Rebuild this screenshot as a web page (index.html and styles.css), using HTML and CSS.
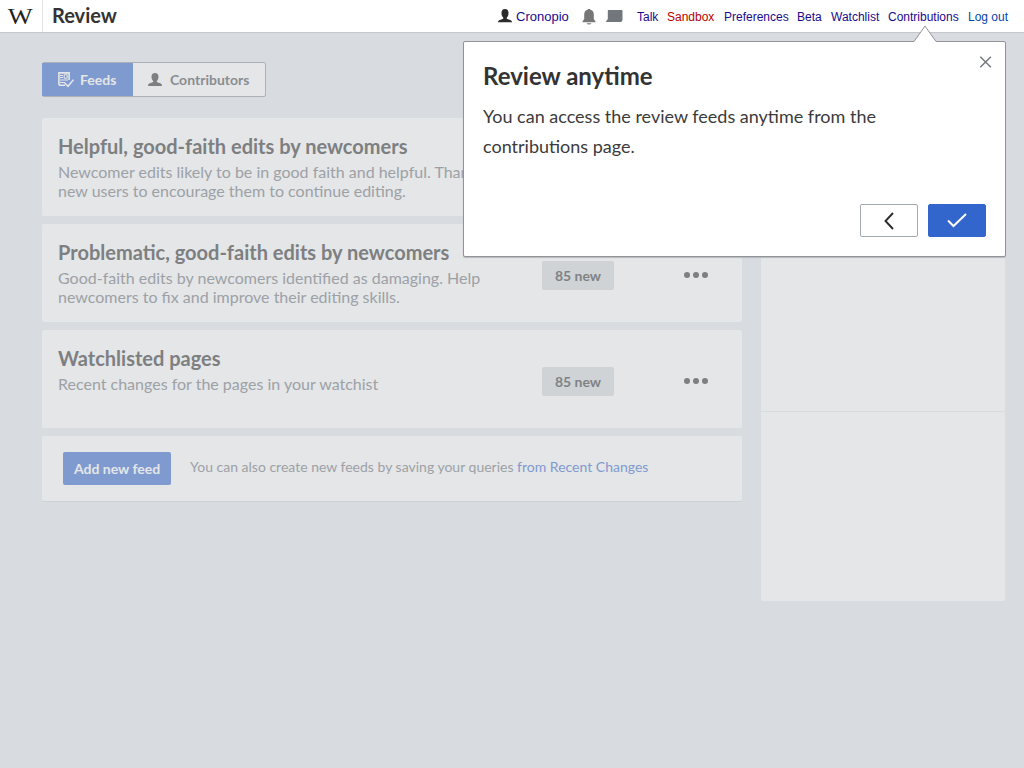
FILE: index.html
```html
<!DOCTYPE html>
<html lang="en">
<head>
<meta charset="utf-8">
<title>Review</title>
<link rel="stylesheet" href="styles.css">
</head>
<body>
<header class="topbar">
  <div class="logo"><span>W</span></div>
  <h1 class="page-title">Review</h1>
  <nav class="personal">
    <svg class="user-icon" width="14" height="14" viewBox="0 0 14 14"><path d="M7 0C4.600 0 3.500 1.600 3.500 4c0 2 .6 3.600 1.700 4.600v1.200L1.200 11.300Q0 11.800 0 13.300h14q0-1.500-1.200-2L8.800 9.800V8.600C9.900 7.600 10.500 6 10.500 4 10.500 1.600 9.400 0 7 0z"/></svg>
    <a class="name" href="#"><span>Cronopio</span></a>
    <svg class="bell-icon" width="14" height="16" viewBox="0 0 14 16"><path d="M6 0h2v.5c2.700.6 3.800 2.500 3.800 5v4.500L13.500 12.500v.8H.5v-.8l1.700-2.500V5.500C2.200 3 3.300 1.100 6 .5zM4.500 14.200h5Q8.500 15.600 7 15.600t-2.500-1.400z"/></svg>
    <svg class="tray-icon" width="17" height="12" viewBox="0 0 17 12"><path d="M2.500 0h13q1 0 1 1v8.500q0 2.500-2 2.500H.2v-.8L1.800 9V1q0-1 .7-1z"/></svg>
    <a class="talk" href="#"><span>Talk</span></a>
    <a class="sandbox" href="#"><span>Sandbox</span></a>
    <a class="prefs" href="#"><span>Preferences</span></a>
    <a class="beta" href="#"><span>Beta</span></a>
    <a class="watch" href="#"><span>Watchlist</span></a>
    <a class="contribs" href="#"><span>Contributions</span></a>
    <a class="logout" href="#"><span>Log out</span></a>
  </nav>
</header>
<main class="page">
  <div class="tabs">
    <div class="tab tab-active">
      <svg width="16" height="16" viewBox="0 0 16 16" fill="none" stroke="#e4e6e8"><path d="M7 13.300H2.500Q.9 13.300.9 11.500V.9h10.200v7" stroke-width="1.600"/><path d="M2 3.500h3M2 5.500h3M2 8h8M2 10.500h5" stroke-width="1.200"/><path d="M6.200 2.700h3v3.500h-3z"/><path d="M6.700 11l3.300 3.300L15.500 7.700" stroke-width="1.600"/></svg>
      <span>Feeds</span>
    </div>
    <div class="tab">
      <svg width="14" height="13" viewBox="0 0 14 14" preserveAspectRatio="none"><path fill="#7d7f81" d="M7 0C4.600 0 3.500 1.600 3.500 4c0 2 .6 3.600 1.700 4.600v1.200L1.200 11.300Q0 11.800 0 14h14q0-2.200-1.200-2.700L8.800 9.800V8.600C9.900 7.600 10.500 6 10.500 4 10.500 1.600 9.400 0 7 0z"/></svg>
      <span>Contributors</span>
    </div>
  </div>
  <div class="columns">
    <section class="feeds">
      <article class="feed">
        <div class="feed-text"><h2>Helpful, good-faith edits by newcomers</h2>
        <p>Newcomer edits likely to be in good faith and helpful. Thank<br>new users to encourage them to continue editing.</p></div>
      </article>
      <article class="feed">
        <div class="feed-text"><h2>Problematic, good-faith edits by newcomers</h2>
        <p>Good-faith edits by newcomers identified as damaging. Help<br>newcomers to fix and improve their editing skills.</p></div>
        <span class="count">85 new</span>
        <svg class="more" width="24" height="6" viewBox="0 0 24 6"><circle cx="3" cy="3" r="3"/><circle cx="12" cy="3" r="3"/><circle cx="21" cy="3" r="3"/></svg>
      </article>
      <article class="feed">
        <div class="feed-text"><h2>Watchlisted pages</h2>
        <p>Recent changes for the pages in your watchist</p></div>
        <span class="count">85 new</span>
        <svg class="more" width="24" height="6" viewBox="0 0 24 6"><circle cx="3" cy="3" r="3"/><circle cx="12" cy="3" r="3"/><circle cx="21" cy="3" r="3"/></svg>
      </article>
      <div class="new-feed">
        <div class="add">Add new feed</div>
        <p>You can also create new feeds by saving your queries <a href="#">from Recent Changes</a></p>
      </div>
    </section>
    <aside class="side"><div class="side-top"></div><div class="side-bottom"></div></aside>
  </div>
</main>
<div class="popup">
  <svg class="pointer" width="26" height="18" viewBox="0 0 26 18"><path d="M1 16.500h1L13 1.500 24 16.500h1V18H1z" fill="#fff"/><path d="M1 16.500h1L13 1 24 16.500h1" fill="none" stroke="#919497"/></svg>
  <svg class="close" width="12" height="12" viewBox="0 0 12 12"><path d="M.3.7l10.600 10.600M10.900.7L.3 11.300" fill="none" stroke="#72777d" stroke-width="1.400"/></svg>
  <h2>Review anytime</h2>
  <p>You can access the review feeds anytime from the<br>contributions page.</p>
  <div class="actions">
    <div class="btn"><svg width="12" height="18" viewBox="0 0 12 18"><path d="M10 1L2.500 9l7.500 8" fill="none" stroke="#2b2b2b" stroke-width="1.900"/></svg></div>
    <div class="btn btn-primary"><svg width="20" height="15" viewBox="0 0 20 15"><path d="M1 7.500l5.500 5.500L19 1" fill="none" stroke="#fff" stroke-width="2"/></svg></div>
  </div>
</div>
</body>
</html>
```

FILE: styles.css
```css
* { box-sizing: border-box; }
body { margin: 0; width: 1024px; height: 768px; overflow: hidden; position: relative; background: #d8dce1; font-family: Lato, "Liberation Sans", sans-serif; color: #333; }
h1, h2, p { margin: 0; }
a { text-decoration: none; }
.topbar { display: flex; height: 33px; background: #fff; border-bottom: 1px solid #c4c8cc; }
.logo { width: 43px; border-right: 1px solid #e2e4e6; font: 24px/32px "Liberation Serif", serif; text-align: center; padding-right: 1px; color: #222; }
.logo span { display: inline-block; transform: scaleX(1.1); }
.page-title { flex: 1; padding-left: 9px; font-size: 20px; line-height: 31px; }
.personal { display: flex; width: 526px; align-items: flex-start; font: 12px/16px "Liberation Sans", sans-serif; padding-top: 9px; }
.personal a { color: #1a0a8c; flex: none; white-space: nowrap; }
.personal svg { flex: none; }
.user-icon { fill: #2b2b2b; }
.personal .name { width: 70px; margin-left: 4px; font-size: 13px; }
.bell-icon { fill: #777; margin-left: -4px; margin-right: 11px; }
.tray-icon { fill: #72777d; margin-left: -1px; margin-right: 14px; margin-top: 1px; }
.personal .talk { width: 30px; }
.personal .sandbox { width: 57px; color: #ba0000; }
.personal .prefs { width: 73px; }
.personal .beta { width: 34px; }
.personal .watch { width: 57px; }
.personal .contribs { width: 80px; }
.personal .logout { color: #0645ad; }
.page { padding: 29px 19px 0 42px; }
.tabs { display: flex; width: 224px; height: 35px; border: 1px solid #adb1b7; border-radius: 2px; background: #e4e6e8; font-size: 14px; font-weight: 700; color: #8a8d91; }
.tab { display: flex; align-items: center; padding-left: 15px; gap: 8px; }
.tab-active { width: 91px; margin-left: -1px; padding-left: 16px; gap: 6px; background: #7f9acf; color: #e4e6e8; }
.columns { display: flex; gap: 19px; margin-top: 21px; }
.feeds { width: 700px; }
.feed { display: flex; height: 98px; margin-bottom: 8px; padding-left: 16px; background: #e4e6e8; border-radius: 2px; }
.feed-text { width: 484px; padding-top: 16px; white-space: nowrap; }
.feed h2 { font-size: 20px; line-height: 24px; color: #7d7f81; }
.feed p { margin-top: 4px; font-size: 16px; line-height: 19px; color: #9da1a6; }
.count { width: 72px; height: 29px; margin-top: 37px; border-radius: 2px; background: #cfd3d6; color: #7f8285; font-size: 14px; font-weight: 700; line-height: 29px; text-align: center; }
.more { margin: 48px 0 0 70px; fill: #7d7f81; }
.new-feed { display: flex; height: 66px; padding: 16px 0 0 21px; background: #e4e6e8; border-radius: 2px; border-bottom: 1px solid #cdd1d5; }
.add { width: 108px; height: 33px; border-radius: 2px; background: #7f9acf; color: #e4e6e8; font-size: 14px; font-weight: 700; line-height: 33px; text-align: center; }
.new-feed p { margin-left: 19px; font-size: 14px; line-height: 30px; color: #9da1a6; }
.new-feed a { color: #7f9acf; }
.side { width: 244px; height: 483px; background: #e4e6e8; border-radius: 2px; }
.side-top { height: 294px; border-bottom: 1px solid #d8dce1; }
.popup { position: absolute; left: 463px; top: 41px; width: 543px; height: 216px; padding: 22px 19px 0; background: #fff; border: 1px solid #919497; border-radius: 2px; box-shadow: 0 1px 1px #b8babd; }
.popup h2 { font-size: 24px; line-height: 24px; color: #333; }
.popup p { margin-top: 13px; font-size: 18px; line-height: 30px; color: #3b3b3b; white-space: nowrap; }
.pointer { position: absolute; left: 448px; top: -17px; }
.close { position: absolute; left: 516px; top: 14px; }
.actions { display: flex; justify-content: flex-end; gap: 10px; margin-top: 43px; }
.btn { display: flex; align-items: center; justify-content: center; width: 58px; height: 33px; border: 1px solid #a2a9b1; border-radius: 2px; }
.btn-primary { background: #36c; border-color: #36c; }
```
